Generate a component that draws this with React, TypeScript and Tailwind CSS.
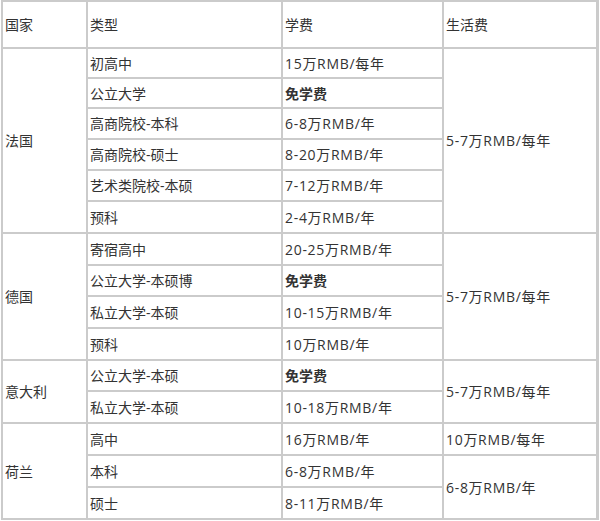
import { Fragment } from "react"

const font = { fontFamily: '"Open Sans", "Noto Sans CJK SC", sans-serif' }

type Row = { type: string; fee: string; bold?: boolean }
type Group = { country: string; rows: Row[]; living: { text: string; span: number }[] }

const groups: Group[] = [
  {
    country: "法国",
    rows: [
      { type: "初高中", fee: "15万RMB/每年" },
      { type: "公立大学", fee: "免学费", bold: true },
      { type: "高商院校-本科", fee: "6-8万RMB/年" },
      { type: "高商院校-硕士", fee: "8-20万RMB/年" },
      { type: "艺术类院校-本硕", fee: "7-12万RMB/年" },
      { type: "预科", fee: "2-4万RMB/年" },
    ],
    living: [{ text: "5-7万RMB/每年", span: 6 }],
  },
  {
    country: "德国",
    rows: [
      { type: "寄宿高中", fee: "20-25万RMB/年" },
      { type: "公立大学-本硕博", fee: "免学费", bold: true },
      { type: "私立大学-本硕", fee: "10-15万RMB/年" },
      { type: "预科", fee: "10万RMB/年" },
    ],
    living: [{ text: "5-7万RMB/每年", span: 4 }],
  },
  {
    country: "意大利",
    rows: [
      { type: "公立大学-本硕", fee: "免学费", bold: true },
      { type: "私立大学-本硕", fee: "10-18万RMB/年" },
    ],
    living: [{ text: "5-7万RMB/每年", span: 2 }],
  },
  {
    country: "荷兰",
    rows: [
      { type: "高中", fee: "16万RMB/年" },
      { type: "本科", fee: "6-8万RMB/年" },
      { type: "硕士", fee: "8-11万RMB/年" },
    ],
    living: [
      { text: "10万RMB/每年", span: 1 },
      { text: "6-8万RMB/年", span: 2 },
    ],
  },
]

const spanClass: Record<number, string> = {
  1: "row-span-1",
  2: "row-span-2",
  3: "row-span-3",
  4: "row-span-4",
  6: "row-span-6",
}

const cell = "bg-white flex items-center pl-[2px] text-[14px] text-[#333] whitespace-nowrap"
const money = "tracking-[0.7px]"

export default function App() {
  return (
    <div className="w-[600px] h-[521px] bg-white pl-[1px]" style={font}>
      <div className="grid w-[598px] gap-[2px] p-[2px] bg-[#cbcbcb] grid-cols-[83px_193px_159px_152px] grid-rows-[45px_28px_28px_29px_29px_29px_30px_30px_29px_30px_30px_29px_30px_30px_30px_30px]">
        <div className={cell}>国家</div>
        <div className={cell}>类型</div>
        <div className={cell}>学费</div>
        <div className={cell}>生活费</div>
        {groups.map((g) => (
          <Section key={g.country} group={g} />
        ))}
      </div>
    </div>
  )
}

function Section({ group }: { group: Group }) {
  const n = group.rows.length
  // row index where each living-cost cell starts
  const starts: Record<number, { text: string; span: number }> = {}
  let at = 0
  for (const l of group.living) {
    starts[at] = l
    at += l.span
  }
  return (
    <>
      {group.rows.map((r, i) => {
        const living = starts[i]
        return (
          <Fragment key={r.type + i}>
            {i === 0 && <div className={`${cell} ${spanClass[n]} col-start-1`}>{group.country}</div>}
            <div className={`${cell} col-start-2`}>{r.type}</div>
            <div className={`${cell} col-start-3 ${r.bold ? "font-bold text-[#222]" : money}`}>{r.fee}</div>
            {living && <div className={`${cell} ${money} col-start-4 ${spanClass[living.span]}`}>{living.text}</div>}
          </Fragment>
        )
      })}
    </>
  )
}
